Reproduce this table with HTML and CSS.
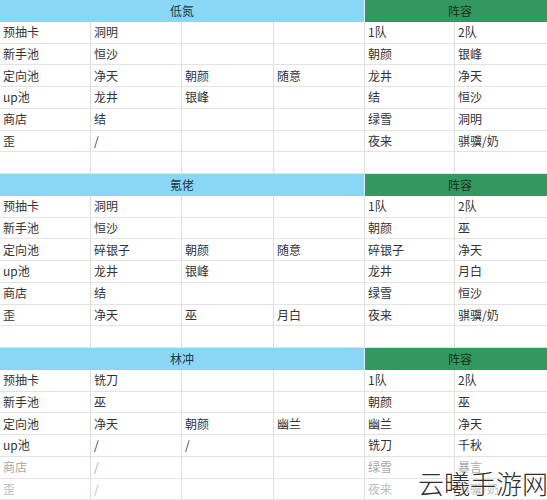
FILE: index.html
```html
<!DOCTYPE html>
<html lang="zh">
<head>
<meta charset="utf-8">
<link rel="stylesheet" href="styles.css">
</head>
<body>
<div class="sheet">
  <div class="grid">
    <div class="hd hd-blue">低氮</div><div class="hd hd-green">阵容</div>
    <div class="c">预抽卡</div><div class="c">洞明</div><div class="c"></div><div class="c"></div><div class="c">1队</div><div class="c">2队</div>
    <div class="c">新手池</div><div class="c">恒沙</div><div class="c"></div><div class="c"></div><div class="c">朝颜</div><div class="c">银峰</div>
    <div class="c">定向池</div><div class="c">净天</div><div class="c">朝颜</div><div class="c">随意</div><div class="c">龙井</div><div class="c">净天</div>
    <div class="c">up池</div><div class="c">龙井</div><div class="c">银峰</div><div class="c"></div><div class="c">结</div><div class="c">恒沙</div>
    <div class="c">商店</div><div class="c">结</div><div class="c"></div><div class="c"></div><div class="c">绿雪</div><div class="c">洞明</div>
    <div class="c">歪</div><div class="c">/</div><div class="c"></div><div class="c"></div><div class="c">夜来</div><div class="c">骐骥/奶</div>
    <div class="c"></div><div class="c"></div><div class="c"></div><div class="c"></div><div class="c"></div><div class="c"></div>

    <div class="hd hd-blue">氪佬</div><div class="hd hd-green">阵容</div>
    <div class="c">预抽卡</div><div class="c">洞明</div><div class="c"></div><div class="c"></div><div class="c">1队</div><div class="c">2队</div>
    <div class="c">新手池</div><div class="c">恒沙</div><div class="c"></div><div class="c"></div><div class="c">朝颜</div><div class="c">巫</div>
    <div class="c">定向池</div><div class="c">碎银子</div><div class="c">朝颜</div><div class="c">随意</div><div class="c">碎银子</div><div class="c">净天</div>
    <div class="c">up池</div><div class="c">龙井</div><div class="c">银峰</div><div class="c"></div><div class="c">龙井</div><div class="c">月白</div>
    <div class="c">商店</div><div class="c">结</div><div class="c"></div><div class="c"></div><div class="c">绿雪</div><div class="c">恒沙</div>
    <div class="c">歪</div><div class="c">净天</div><div class="c">巫</div><div class="c">月白</div><div class="c">夜来</div><div class="c">骐骥/奶</div>
    <div class="c"></div><div class="c"></div><div class="c"></div><div class="c"></div><div class="c"></div><div class="c"></div>

    <div class="hd hd-blue">林冲</div><div class="hd hd-green">阵容</div>
    <div class="c">预抽卡</div><div class="c">铣刀</div><div class="c"></div><div class="c"></div><div class="c">1队</div><div class="c">2队</div>
    <div class="c">新手池</div><div class="c">巫</div><div class="c"></div><div class="c"></div><div class="c">朝颜</div><div class="c">巫</div>
    <div class="c">定向池</div><div class="c">净天</div><div class="c">朝颜</div><div class="c">幽兰</div><div class="c">幽兰</div><div class="c">净天</div>
    <div class="c">up池</div><div class="c">/</div><div class="c">/</div><div class="c"></div><div class="c">铣刀</div><div class="c">千秋</div>
    <div class="c f1">商店</div><div class="c f1">/</div><div class="c"></div><div class="c"></div><div class="c f1">绿雪</div><div class="c f1">暴言</div>
    <div class="c f2">歪</div><div class="c f2">/</div><div class="c"></div><div class="c"></div><div class="c f2">夜来</div><div class="c f2">骐骥/奶</div>
  </div>
  <div class="watermark">云曦手游网</div>
</div>
</body>
</html>
```
FILE: styles.css
```css
html, body {
  margin: 0;
  padding: 0;
  background: #ffffff;
}
body {
  font-family: "Noto Sans CJK SC", "Noto Sans", sans-serif;
  font-size: 12px;
  color: #333333;
  overflow: hidden;
  width: 547px;
  height: 500px;
}
.sheet {
  position: relative;
  width: 547px;
  height: 500px;
  overflow: hidden;
}
.grid {
  display: grid;
  grid-template-columns: 91px 91px 92px 91px 90px 100px;
  grid-auto-rows: 21.75px;
  width: 555px;
}
.c {
  border-right: 1px solid #dedede;
  border-bottom: 1px solid #e3e3e3;
  padding: 0 3px;
  display: flex;
  align-items: center;
  white-space: nowrap;
  overflow: hidden;
  line-height: 1;
}
.hd {
  display: flex;
  align-items: center;
  justify-content: center;
  line-height: 1;
  color: #1d3a44;
}
.hd-blue {
  grid-column: span 4;
  background: #8ad7f5;
  border-right: 1px solid #d9eef6;
}
.hd-green {
  grid-column: span 2;
  background: #32985f;
  color: #17301f;
}
.f1 {
  color: #a8a8a8;
}
.f2 {
  color: #bdbdbd;
}
.watermark {
  position: absolute;
  right: -1px;
  bottom: 4px;
  font-size: 26px;
  font-weight: 300;
  color: #2e2e2e;
  line-height: 1;
  text-shadow: 0 0 2px #ffffff, 0 0 2px #ffffff;
}
```
